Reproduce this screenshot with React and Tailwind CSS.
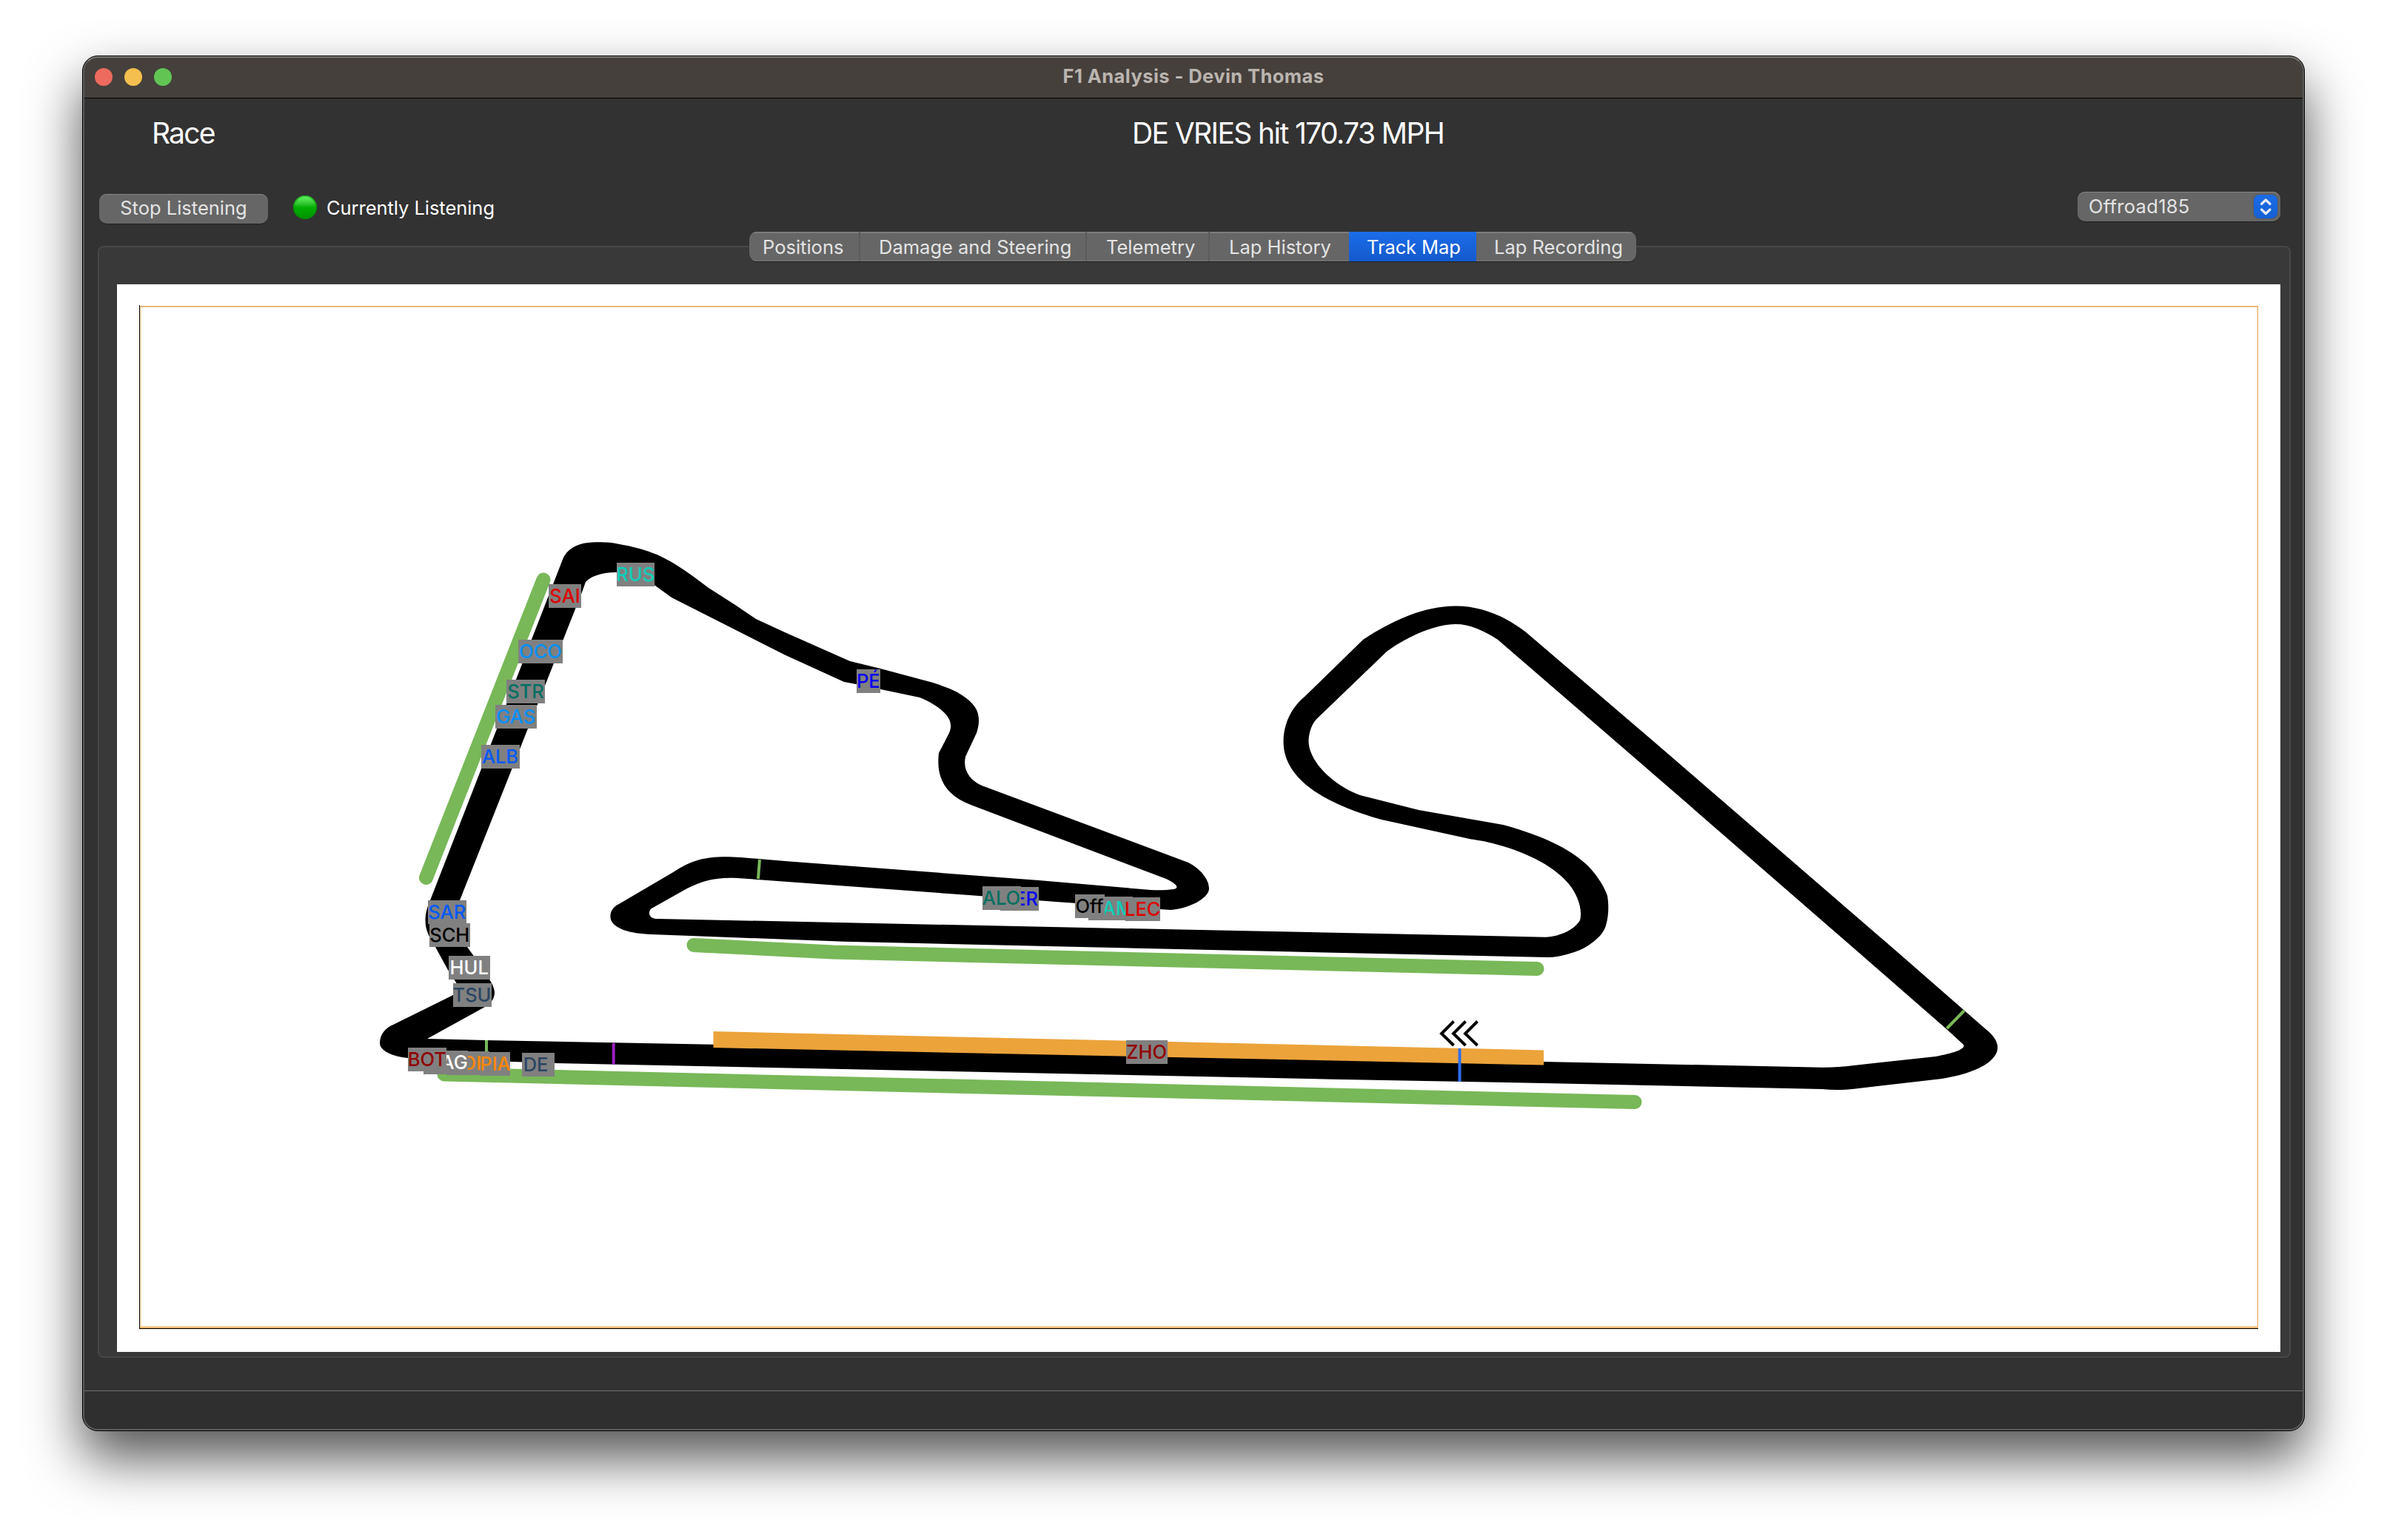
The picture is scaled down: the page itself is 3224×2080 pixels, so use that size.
const TRACK_OUTER =
  "M581 1216 L761 753 C768 739 784 733 800 732.5 C812 732 826 732.5 834 734.5 C855 738 872 743 879 746 C908 756 934 777 957 794 L993 817 L1021 836 L1060 854 L1148 893 L1189 903 L1260 922 C1272 926 1284 930 1293 935 C1310 945 1320 955 1321.5 967 C1323 975 1321 984 1319 990 L1304 1022 C1300 1040 1310 1054 1326 1061 L1605 1165 C1622 1174 1633 1188 1633 1200 C1633 1213 1607 1227 1581 1229 L1426 1218 L1309 1209 L996 1186 C968 1184.5 950 1189 928 1200 L880 1227 C875 1231 875 1241 889 1241 L2087 1265.7 C2109 1265 2128 1254 2134 1243 C2138 1228 2130 1207 2119 1194 C2098 1168 2056 1149 2016 1139 C2000 1135 1994 1134.5 1987 1133.5 L1866 1107 C1795 1087 1733 1055 1733.5 1001 C1734 975 1746 954 1762 941 L1841 864 C1880 838 1924 818.5 1966 818.5 C2005 818.5 2038 836 2060 853 L2240 1007 L2556 1280 L2682 1390 C2700 1404 2704 1419 2688 1433 C2677 1443 2650 1454 2614 1458 L2504 1470.7 C2490 1472.5 2475 1472.5 2461 1471 L2085 1463 L1800 1457.7 L1140 1444 L749 1436 L551 1429 C530 1427 513 1419 513 1409 C513 1397 521 1388 531 1384 L610 1345 L622 1337 L616 1327 L605 1310 L588 1279 L580 1265 C573 1252 572 1236 581 1216 Z";

const TRACK_INNER =
  "M621 1216 L786 800 L791 786 C797 779 812 773 832 773 C852 774 872 782 885 791 L907 807 L1060 884.6 L1140 921 L1156 924 L1242 942 C1262 950 1279 962 1283 974 C1285 981 1284 985 1282 990 L1268 1017 C1264 1051 1277 1074 1311 1087 L1575 1187 C1592 1195 1592 1200 1585 1201 C1575 1202.5 1564 1202.5 1554 1202 L1403 1189 L1060 1163 L1000 1158 C975 1156 958 1158 946 1160.7 C930 1165 920 1171 911 1177 L836 1221 C826 1226 823 1234 825 1242 C829 1254 850 1261 880 1262 L1140 1271.7 L1680 1284 L2091 1293 C2107 1293 2125 1287 2137 1281.8 C2155 1272 2166 1261 2169 1250 C2173 1237 2173 1222 2171 1210 C2166 1194 2152 1176 2141 1166 C2120 1147 2085 1129 2030 1114 L1916 1094 L1837 1074 C1800 1060 1767 1028 1767.5 1000 C1768 987 1773 975 1782 967.5 L1873 880 C1903 858 1940 843 1966 843 C1985 843 2003 851 2023 864 L2240 1051.4 L2503 1280 L2628 1389 L2652 1411 C2655 1417 2640 1422 2614 1427 L2504 1439 Q2480 1442 2461 1441.7 L2085 1434 L963 1410.7 L657 1405 L577 1403 L655 1360 C666 1354 670 1344 667 1335 Q665 1329 663 1326 L639 1290 L631 1279 C622 1263 616 1250 616 1240 C616 1230 619 1222 621 1216 Z";

// Drivers are listed back to front, in the map's own coordinates.
const drivers = [
  { code: "RUS", x: 832.5, y: 759.5, w: 51.5, color: "text-[#0bcfba]" },
  { code: "SAI", x: 741, y: 788.5, w: 44, color: "text-[#dc0000]" },
  { code: "OCO", x: 700, y: 864, w: 60, color: "text-[#0090ff]" },
  { code: "STR", x: 684, y: 917.5, w: 52, color: "text-[#006f62]" },
  { code: "GAS", x: 669, y: 952, w: 55.5, color: "text-[#0090ff]" },
  { code: "ALB", x: 649.5, y: 1006, w: 52, color: "text-[#005aff]" },
  { code: "SAR", x: 578, y: 1215.5, w: 51.5, color: "text-[#005aff]" },
  { code: "SCH", x: 579.5, y: 1247, w: 55.5, color: "text-black" },
  { code: "HUL", x: 606, y: 1291, w: 55.5, color: "text-white" },
  { code: "TSU", x: 611.5, y: 1328, w: 52, color: "text-[#2b4562]" },
  { code: "NOR", x: 603, y: 1420, w: 58, color: "text-[#ff8700]" },
  { code: "MAG", x: 572, y: 1419, w: 60, color: "text-white" },
  { code: "BOT", x: 551, y: 1415, w: 51.5, color: "text-[#900000]" },
  { code: "PIA", x: 649, y: 1421, w: 40, color: "text-[#ff8700]" },
  { code: "DE ", x: 705, y: 1422, w: 44, color: "text-[#2b4562]" },
  { code: "PÉ", x: 1157, y: 903.5, w: 31.5, color: "text-[#0600ef]" },
  { code: "VER", x: 1351, y: 1198, w: 52, color: "text-[#0600ef]" },
  { code: "ALO", x: 1326.5, y: 1196.5, w: 52, color: "text-[#006f62]" },
  { code: "HAM", x: 1470, y: 1211, w: 60, color: "text-[#0bcfba]" },
  { code: "Off", x: 1451.5, y: 1207.5, w: 40, color: "text-black" },
  { code: "LEC", x: 1519.5, y: 1211.5, w: 47.5, color: "text-[#dc0000]" },
  { code: "ZHO", x: 1520.5, y: 1405, w: 56, color: "text-[#900000]" },
];

const tabs = [
  { name: "Positions", width: "w-[150px]", pad: "pl-[18px]" },
  { name: "Damage and Steering", width: "w-[306px]", pad: "pl-[25px]" },
  { name: "Telemetry", width: "w-[166px]", pad: "pl-[26px]" },
  { name: "Lap History", width: "w-[188px]", pad: "pl-[26px]" },
  { name: "Track Map", width: "w-[172px]", pad: "pl-[24px]" },
  { name: "Lap Recording", width: "w-[216px]", pad: "pl-[24px]" },
];

function TitleBar() {
  return (
    <div className="grid h-[57px] shrink-0 grid-cols-[1fr_auto_1fr] items-center border-b border-black bg-[#45403c]">
      <div className="flex gap-4 pl-4">
        <span className="size-6 rounded-full bg-[#ed6a5e]" />
        <span className="size-6 rounded-full bg-[#f5bf4f]" />
        <span className="size-6 rounded-full bg-[#61c554]" />
      </div>
      <h1 className="pb-[3px] text-[25.5px] leading-8 font-bold tracking-[0.42px] text-[#bab5b0]">
        F1 Analysis - Devin Thomas
      </h1>
    </div>
  );
}

function Toolbar() {
  return (
    <div className="flex h-[86px] shrink-0 items-start pr-[32px] pl-[22px] text-[25.5px] leading-9">
      <button className="mt-[35px] h-10 w-[228px] rounded-[10px] bg-[#666666] pb-[2px] text-[#e4e4e4] shadow-[inset_0_1px_0_#858585,0_1px_1px_rgba(0,0,0,0.35)]">
        Stop Listening
      </button>
      <span className="mt-[37px] ml-[34px] size-8 rounded-full bg-linear-to-b from-[#5cf25c] from-8% via-[#00ae00] via-50% to-[#009300] shadow-[inset_0_0_2px_1px_#078a07]" />
      <span className="mt-9 ml-[13px] tracking-[-0.05px] text-white">Currently Listening</span>
      <div className="mt-8 ml-auto flex h-10 w-[274px] items-center justify-between rounded-[10px] bg-[#666666] pr-1 pl-[15px] text-[#e4e4e4] shadow-[inset_0_1px_0_#858585,0_1px_1px_rgba(0,0,0,0.35)]">
        <span className="tracking-[0.3px]">Offroad185</span>
        <span className="flex size-8 items-center justify-center rounded-lg bg-linear-to-b from-[#1a6ce8] to-[#1560d4] shadow-[0_0_2px_rgba(0,0,0,0.4)]">
          <svg viewBox="0 0 32 32" className="size-8" fill="none" stroke="#e8edf6" strokeWidth="3.2" strokeLinecap="round" strokeLinejoin="round">
            <path d="M10.5 12.5 L16.3 7 L22 12.5 M10.5 20 L16.3 25.5 L22 20" />
          </svg>
        </span>
      </div>
    </div>
  );
}

function Tabs() {
  return (
    <div className="relative z-10 ml-[900px] flex h-10 w-[1198px] shrink-0 overflow-hidden rounded-[10px] bg-[#666666] text-[25.5px] leading-[41px] whitespace-nowrap text-[#e4e4e4] shadow-[0_1px_1px_rgba(0,0,0,0.4)]">
      {tabs.map((tab, i) => (
        <div
          key={tab.name}
          className={
            tab.name === "Track Map"
              ? `${tab.width} ${tab.pad} bg-linear-to-b from-[#1b6de9] to-[#1459cc] tracking-[-0.1px] text-white`
              : `${tab.width} ${tab.pad} ${i < 3 ? "border-r-2 border-[#5b5b5b]" : ""} shadow-[inset_0_2px_0_#7d7d7d,inset_0_-2px_0_#6e6e6e]`
          }
        >
          {tab.name}
        </div>
      ))}
    </div>
  );
}

function TrackMap() {
  return (
    <div className="relative h-[1442px] w-[2922px] overflow-hidden bg-white">
      <svg viewBox="158 384 2922 1442" className="block size-full">
        <g shapeRendering="crispEdges">
          <rect x="189" y="413" width="2861" height="2" fill="#ecb97b" />
          <rect x="189" y="415" width="2" height="1378" fill="#f7dfb8" />
          <rect x="3047" y="415" width="2" height="1378" fill="#fcf3e6" />
          <rect x="3049" y="413" width="1" height="1381" fill="#e8a752" />
          <rect x="189" y="1791" width="2861" height="2" fill="#f3cd97" />
          <rect x="189" y="1793" width="2861" height="1" fill="#e8a24a" />
          <rect x="188" y="412" width="1" height="1383" fill="#000000" />
          <rect x="188" y="1794" width="2862" height="1" fill="#000000" />
        </g>
        <path d={`${TRACK_OUTER} ${TRACK_INNER}`} fill="#000000" fillRule="evenodd" />
        <g fill="none" stroke="#78b858" strokeWidth="19" strokeLinecap="round" strokeLinejoin="round">
          <path d="M734 783 L575.5 1185.5" />
          <path d="M937 1276.5 L1125 1286 L2076 1308.5" />
          <path d="M600 1451 L2208 1488.5" />
        </g>
        <path d="M963.5 1393 L2085 1418.5 V1438.5 L963.5 1415 Z" fill="#eca33a" />
        <g fill="none" strokeWidth="4">
          <path d="M1026 1161 L1024 1187" stroke="#78b858" />
          <path d="M657 1405 V1436" stroke="#78b858" />
          <path d="M2653 1365 L2629.5 1389" stroke="#78b858" />
          <path d="M828.7 1409 V1437.5" stroke="#9b1fc1" />
          <path d="M1971.5 1416 V1461" stroke="#2f6fec" />
          <path d="M1963.5 1379.5 L1947 1396 L1963.5 1412 M1979.5 1379.5 L1963 1396 L1979.5 1412 M1995.5 1379.5 L1979 1396 L1995.5 1412" stroke="#000000" />
        </g>
      </svg>
      {drivers.map((d) => (
        <span
          key={d.code}
          className={`absolute flex h-8 justify-center bg-[#808080] text-[25.5px] leading-8 font-[450] whitespace-pre ${d.color}`}
          style={{ left: d.x - 158, top: d.y - 384, width: d.w }}
        >
          {d.code}
        </span>
      ))}
    </div>
  );
}

export default function App() {
  return (
    <div className="h-[2080px] w-[3224px] overflow-hidden bg-white pt-[75px] pl-[111px] font-['Inter',sans-serif]">
      <div className="relative flex h-[1858px] w-[3002px] flex-col overflow-hidden rounded-[21px] border border-black bg-[#323232] shadow-[0_36px_72px_rgba(0,0,0,0.68)]">
        <TitleBar />
        <div className="flex h-[94px] shrink-0 items-center text-[39px] leading-[48px] tracking-[-1.6px] text-white">
          <span className="ml-[93px] w-[1324px] tracking-[-1.8px]">Race</span>
          <span>DE VRIES hit 170.73 MPH</span>
        </div>
        <Toolbar />
        <Tabs />
        <div className="-mt-[21px] ml-5 h-[1502px] w-[2962px] shrink-0 rounded-lg border-2 border-[#474747] bg-[#393939] pt-[50px] pl-6">
          <TrackMap />
        </div>
        <div className="mt-11 flex-1 border-t border-[#707070] bg-[#2f2f2f]" />
        <div className="pointer-events-none absolute inset-0 rounded-[20px] border-2 border-[#5c5c5b] border-t-[#7c7b76]" />
      </div>
    </div>
  );
}
